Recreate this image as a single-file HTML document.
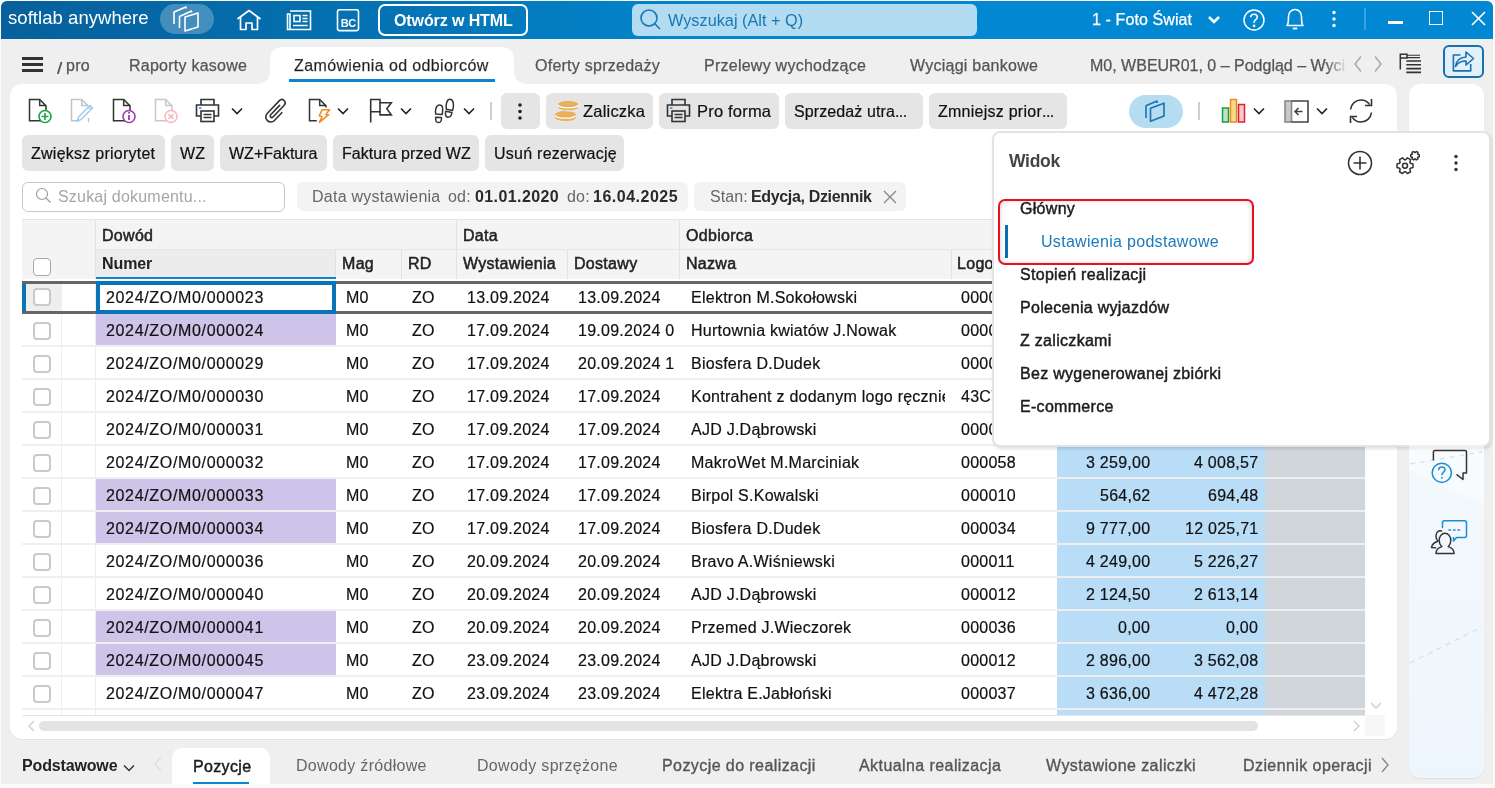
<!DOCTYPE html>
<html><head><meta charset="utf-8">
<style>
*{box-sizing:border-box;margin:0;padding:0}
html,body{width:1495px;height:788px;overflow:hidden;background:#fcfbf9;font-family:"Liberation Sans",sans-serif;color:#1c1c1c;position:relative}
.a{position:absolute;white-space:nowrap;will-change:transform}
#win{position:absolute;left:1px;top:1px;width:1492px;height:783px;background:#efefef;overflow:hidden;border-radius:6px 6px 0 0}
#hdr{position:absolute;left:0;top:0;width:1492px;height:38px;background:linear-gradient(90deg,#06609b 0%,#0472b3 25%,#0284cb 45%,#0288d2 60%,#0288d3 100%)}
.btn{position:absolute;height:36px;background:#e5e5e5;border-radius:6px;font-size:16px;line-height:37px;padding:0 9px;letter-spacing:.25px;color:#111;white-space:nowrap;-webkit-text-stroke:.2px #111}
.chip{position:absolute;top:182px;height:29px;background:#f3f3f3;border-radius:6px}
.td{font-size:16px;letter-spacing:.25px;color:#111;-webkit-text-stroke:.2px #111}
.hd{font-size:16px;letter-spacing:.3px;color:#222;-webkit-text-stroke:.5px #222}
.cbx{width:18px;height:18px;border:2px solid #cacaca;border-radius:4px;background:#fff}
.tab{position:absolute;top:57px;font-size:16px;color:#555;letter-spacing:.25px;white-space:nowrap;-webkit-text-stroke:.25px #555}
.btab{position:absolute;top:757px;font-size:16px;color:#666;letter-spacing:.3px;white-space:nowrap}
.bm{color:#555;letter-spacing:.42px;-webkit-text-stroke:.35px #555}
.mi{position:absolute;left:1020px;font-size:16px;color:#1c1c1c;letter-spacing:.3px;white-space:nowrap;-webkit-text-stroke:.45px #1c1c1c}
.btn,.tab,.btab,.mi{will-change:transform}
</style></head><body>
<div id="win"><div id="hdr"></div></div>
<!-- HEADER -->
<div class="a" style="left:8px;top:7px;font-size:18.5px;color:#fff;letter-spacing:.05px">softlab anywhere</div>
<div class="a" style="left:160px;top:4px;width:54px;height:30px;border-radius:15px;background:rgba(255,255,255,.25)"></div>
<svg class="a" style="left:172px;top:6px" width="32" height="28" viewBox="0 0 32 28" fill="none" stroke="#fff" stroke-width="1.6" stroke-linejoin="round">
 <path d="M2 18 V6 L14 1 V2.5"/>
 <path d="M7.5 22 V10.5 L19.5 5 V6.5"/>
 <path d="M13 11 L26 7 V21 L13 25 Z"/>
</svg>
<svg class="a" style="left:236px;top:9px" width="26" height="22" viewBox="0 0 26 22" fill="none" stroke="#fff" stroke-width="1.7" stroke-linejoin="round">
 <path d="M1.5 10 L13 1.5 L24.5 10"/>
 <path d="M4.5 8 V20.5 H10 V14 H16 V20.5 H21.5 V8"/>
</svg>
<svg class="a" style="left:286px;top:9px" width="26" height="22" viewBox="0 0 26 22" fill="none" stroke="#fff" stroke-width="1.6">
 <path d="M4 2 H24.5 V20.5 H1.5 V5 H4 V20.5"/>
 <rect x="8" y="6.5" width="6" height="6"/>
 <path d="M16.5 6.5 H21.5 M16.5 9.5 H21.5 M16.5 12.5 H21.5 M7 16.5 H21.5"/>
</svg>
<svg class="a" style="left:336px;top:8px" width="25" height="24" viewBox="0 0 25 24" fill="none">
 <rect x="1.5" y="1.8" width="21" height="20.8" rx="2" stroke="#fff" stroke-width="1.6"/>
 <text x="12.3" y="19" text-anchor="middle" font-family="Liberation Sans" font-weight="bold" font-size="11" fill="#fff" letter-spacing="-.3">BC</text>
</svg>
<div class="a" style="left:378px;top:4px;width:150px;height:32px;border:2px solid #fff;border-radius:7px"></div>
<div class="a" style="left:394px;top:12px;font-size:16px;font-weight:bold;color:#fff;letter-spacing:-.1px">Otwórz w HTML</div>
<div class="a" style="left:632px;top:4px;width:345px;height:32px;background:#b3dcf2;border-radius:6px"></div>
<svg class="a" style="left:638px;top:8px" width="26" height="24" viewBox="0 0 26 24" fill="none" stroke="#1677b5" stroke-width="1.6">
 <circle cx="11" cy="10" r="8"/><path d="M16.8 15.8 L22 21"/>
</svg>
<div class="a" style="left:668px;top:11px;font-size:16.3px;color:#1677b5;letter-spacing:0">Wyszukaj (Alt + Q)</div>
<div class="a" style="left:1092px;top:11px;font-size:16px;color:#fff;letter-spacing:.1px;-webkit-text-stroke:.25px #fff">1 - Foto Świat</div>
<svg class="a" style="left:1207px;top:14px" width="14" height="12" viewBox="0 0 14 12" fill="none" stroke="#fff" stroke-width="2.6"><path d="M2 3 L7 8 L12 3"/></svg>
<svg class="a" style="left:1242px;top:9px" width="24" height="22" viewBox="0 0 24 22" fill="none" stroke="#fff" stroke-width="1.5">
 <circle cx="12" cy="11" r="10"/>
 <path d="M8.7 8.3 C8.7 6.3 10.2 5.2 12 5.2 C13.9 5.2 15.3 6.4 15.3 8.2 C15.3 10.5 12.1 10.8 12.1 13.3 V14"/>
 <circle cx="12.1" cy="16.8" r=".6" fill="#fff"/>
</svg>
<svg class="a" style="left:1284px;top:6px" width="22" height="26" viewBox="0 0 22 26" fill="none" stroke="#fff" stroke-width="1.6" stroke-linejoin="round">
 <path d="M3 19.5 C4.5 18 4.5 15.5 4.5 10.5 C4.5 6.5 7.2 3.5 11 3.5 C14.8 3.5 17.5 6.5 17.5 10.5 C17.5 15.5 17.5 18 19 19.5 Z"/>
 <path d="M8.8 22.5 H13.2" stroke-width="1.8"/>
</svg>
<svg class="a" style="left:1330px;top:9px" width="8" height="20" viewBox="0 0 8 20" fill="#fff"><circle cx="4" cy="3.5" r="1.7"/><circle cx="4" cy="10" r="1.7"/><circle cx="4" cy="16.5" r="1.7"/></svg>
<div class="a" style="left:1364px;top:8px;width:2px;height:22px;background:rgba(255,255,255,.22)"></div>
<div class="a" style="left:1388px;top:21px;width:15px;height:3px;background:#fff"></div>
<div class="a" style="left:1429px;top:11px;width:14px;height:14px;border:1.7px solid #fff"></div>
<svg class="a" style="left:1470px;top:10px" width="17" height="17" viewBox="0 0 17 17" stroke="#fff" stroke-width="1.7"><path d="M2 2 L15 15 M15 2 L2 15"/></svg>

<!-- TAB BAR -->
<div class="a" style="left:22px;top:57px;width:21px;height:3px;background:#333"></div>
<div class="a" style="left:22px;top:63px;width:21px;height:3px;background:#333"></div>
<div class="a" style="left:22px;top:69px;width:21px;height:3px;background:#333"></div>
<div class="a" style="left:66px;top:57px;font-size:16px;color:#555;letter-spacing:.25px;-webkit-text-stroke:.25px #555">pro</div>
<svg class="a" style="left:56px;top:60px" width="8" height="15" viewBox="0 0 8 15"><path d="M1.8 14 L5.5 2" stroke="#555" stroke-width="1.8"/></svg>
<div class="tab" style="left:129px">Raporty kasowe</div>
<!-- active tab -->
<div class="a" style="left:270px;top:47px;width:244px;height:40px;background:#fff;border-radius:12px 12px 0 0"></div>
<div class="a" style="left:258px;top:72px;width:12px;height:12px;background:radial-gradient(circle at 0 0,#efefef 11.5px,#fff 12px)"></div>
<div class="a" style="left:514px;top:72px;width:12px;height:12px;background:radial-gradient(circle at 100% 0,#efefef 11.5px,#fff 12px)"></div>
<div class="tab" style="left:294px;color:#1c1c1c;letter-spacing:.38px">Zamówienia od odbiorców</div>
<div class="a" style="left:289px;top:79px;width:206px;height:3px;background:#0a85d0"></div>
<div class="tab" style="left:535px">Oferty sprzedaży</div>
<div class="tab" style="left:704px">Przelewy wychodzące</div>
<div class="tab" style="left:910px">Wyciągi bankowe</div>
<div class="a" style="left:1090px;top:39px;width:256px;height:45px;overflow:hidden"><div class="a" style="left:0;top:18px;font-size:16px;color:#555;letter-spacing:.0px;-webkit-text-stroke:.25px #555">M0, WBEUR01, 0 – Podgląd – Wyciągi</div></div>
<div class="a" style="left:1326px;top:39px;width:24px;height:45px;background:linear-gradient(90deg,rgba(239,239,239,0),#efefef 90%)"></div>
<svg class="a" style="left:1350px;top:54px" width="40" height="20" viewBox="0 0 40 20" fill="none" stroke="#aaa" stroke-width="1.5"><path d="M11 2.5 L5 10 L11 17.5"/><path d="M25 2.5 L31 10 L25 17.5"/></svg>
<svg class="a" style="left:1398px;top:51px" width="26" height="26" viewBox="0 0 26 26" fill="none" stroke="#333">
 <path d="M2.3 18.5 V3.3 H9 V7 H2.3" stroke-width="1.5"/>
 <path d="M9 4.2 H22 M9 6.6 H22" stroke-width="1.1"/>
 <path d="M8.3 10 H23 M8.3 13.8 H23 M8.3 17.6 H23 M8.3 21.4 H23" stroke-width="1.6"/>
</svg>
<div class="a" style="left:1443px;top:45px;width:41px;height:33px;border:2px solid #1a6fae;border-radius:6px;background:#e2f0fa"></div>
<svg class="a" style="left:1451px;top:49px" width="26" height="26" viewBox="0 0 26 26" fill="none" stroke="#1a6fae" stroke-width="1.6" stroke-linejoin="round">
 <path d="M9.5 6 H2.4 V21.9 H19.7 V15"/>
 <path d="M4.5 17.5 C5 12 8.5 8.5 15 8 V3 L22.5 9.5 L15 16 V12 C10 12 6.5 14 4.5 17.5 Z"/>
</svg>
<!-- main panel -->
<div class="a" style="left:10px;top:84px;width:1387px;height:655px;background:#fff;border-radius:12px;box-shadow:0 1px 0 #e2e2e2"></div>
<div class="a" style="left:258px;top:84px;width:268px;height:12px;background:#fff"></div>
<!-- right panel -->
<div class="a" style="left:1409px;top:84px;width:75px;height:694px;border-radius:12px;background:linear-gradient(180deg,#fff 0%,#fff 30%,#f3f8fc 55%,#eef6fd 100%);box-shadow:0 1px 1px rgba(0,0,0,.08)"></div>

<!-- TOOLBAR ROW 1 icons -->
<svg class="a" style="left:28px;top:98px" width="26" height="26" viewBox="0 0 26 26" fill="none" stroke-width="1.5">
 <path d="M13 22.7 H1.5 V1.5 H11.7 L18 7.9 V12" stroke="#333"/>
 <path d="M11.7 1.5 V7.5 H18" stroke="#333"/>
 <circle cx="17" cy="18.5" r="6" stroke="#1fa64a" stroke-width="1.7" fill="#fff"/>
 <path d="M17 15 V22 M13.5 18.5 H20.5" stroke="#1fa64a" stroke-width="1.7"/>
</svg>
<svg class="a" style="left:70px;top:98px" width="26" height="26" viewBox="0 0 26 26" fill="none" stroke-width="1.5">
 <path d="M8 22.7 H1.5 V1.5 H11.7 L18 7.9 V8.5" stroke="#c4c4c4"/>
 <path d="M11.7 1.5 V7.5 H18" stroke="#c4c4c4"/>
 <path d="M18 23.5 H18.5 V20" stroke="#c4c4c4"/>
 <path d="M7.5 23 L8.5 19 L20 7.5 L22.5 10 L11 21.5 Z M18.5 9 L21 11.5" stroke="#9fcbee" stroke-linejoin="round"/>
</svg>
<svg class="a" style="left:112px;top:98px" width="26" height="26" viewBox="0 0 26 26" fill="none" stroke-width="1.5">
 <path d="M13 22.7 H1.5 V1.5 H11.7 L18 7.9 V12" stroke="#333"/>
 <path d="M11.7 1.5 V7.5 H18" stroke="#333"/>
 <circle cx="17" cy="18.5" r="6" stroke="#9b3fb0" stroke-width="1.6" fill="#fff"/>
 <path d="M17 17 V22" stroke="#9b3fb0" stroke-width="1.8"/><circle cx="17" cy="14.8" r="1" fill="#9b3fb0"/>
</svg>
<svg class="a" style="left:154px;top:98px" width="26" height="26" viewBox="0 0 26 26" fill="none" stroke-width="1.5">
 <path d="M13 22.7 H1.5 V1.5 H11.7 L18 7.9 V12" stroke="#c8c8c8"/>
 <path d="M11.7 1.5 V7.5 H18" stroke="#c8c8c8"/>
 <circle cx="17" cy="18.5" r="6" stroke="#f6b8b8" stroke-width="1.5" fill="#fff"/>
 <path d="M14.6 16.1 L19.4 20.9 M19.4 16.1 L14.6 20.9" stroke="#f6b8b8" stroke-width="1.5"/>
</svg>
<svg class="a" style="left:195px;top:98px" width="26" height="26" viewBox="0 0 26 26" fill="none" stroke="#333" stroke-width="1.6">
 <path d="M6 7 V1.5 H19 V7"/>
 <path d="M6 18 H1.5 V7 H23.5 V18 H19"/>
 <rect x="6" y="13" width="13" height="10.5"/>
 <path d="M8.5 16.5 H16.5 M8.5 19.5 H16.5" stroke-width="1.3"/>
 <path d="M4 10 H6.5" stroke="#1e88e5" stroke-width="1.5"/>
</svg>
<svg class="a" style="left:230px;top:105px" width="14" height="12" viewBox="0 0 14 12" fill="none" stroke="#222" stroke-width="1.6"><path d="M2 3.5 L7 8.5 L12 3.5"/></svg>
<svg class="a" style="left:258px;top:94px" width="36" height="34" viewBox="0 0 36 34" fill="none" stroke="#333" stroke-width="1.6" stroke-linecap="round">
 <g transform="translate(12.8 23) rotate(43.5)"><path d="M5 -10.7 V0 A5 5 0 0 1 -5 0 V-17.8 A3.3 3.3 0 0 1 1.6 -17.8 V-1.5 A1.6 1.6 0 0 1 -1.6 -1.5 V-14.5"/></g>
</svg>
<svg class="a" style="left:308px;top:98px" width="26" height="26" viewBox="0 0 26 26" fill="none" stroke-width="1.5" stroke-linejoin="miter">
 <path d="M8.8 22.7 H1.5 V1.5 H11.7 L18 7.9 V9.5" stroke="#333"/>
 <path d="M11.7 1.5 V7.5 H18" stroke="#333"/>
 <path d="M14.2 11.7 L21.6 11.7 L17.8 16.4 L20.7 16.7 L11.4 24.3 L14.1 18.8 L11.2 17.9 Z" stroke="#f08a24" stroke-width="1.5" stroke-linejoin="round" fill="#fff"/>
</svg>
<svg class="a" style="left:336px;top:105px" width="14" height="12" viewBox="0 0 14 12" fill="none" stroke="#222" stroke-width="1.6"><path d="M2 3.5 L7 8.5 L12 3.5"/></svg>
<svg class="a" style="left:368px;top:98px" width="26" height="26" viewBox="0 0 26 26" fill="none" stroke="#333" stroke-width="1.6" stroke-linejoin="miter">
 <path d="M2.7 24.6 V1.5 H12 V4.7 H23.3 L18.8 10.8 L23.3 16.9 H12 V13.7 H2.7"/><path d="M12 4.7 V13.7"/>
</svg>
<svg class="a" style="left:399px;top:105px" width="14" height="12" viewBox="0 0 14 12" fill="none" stroke="#222" stroke-width="1.6"><path d="M2 3.5 L7 8.5 L12 3.5"/></svg>
<svg class="a" style="left:433px;top:98px" width="24" height="26" viewBox="0 0 24 26" fill="none" stroke="#333" stroke-width="1.5" stroke-linejoin="round">
 <path d="M2.7 16 C2 12 3 7 6.6 7 C9.9 7 10.2 11 9.3 16.5 Z"/>
 <path d="M2.8 19.2 L8.4 19.4 C8.8 22 8 24.6 5.5 24.6 C3 24.6 2.2 22 2.8 19.2 Z"/>
 <path d="M13.4 11.3 C12.6 7 13.5 1.3 16.9 1.3 C20.5 1.3 21.3 6.5 19.7 12.4 Z"/>
 <path d="M12.7 13.3 L18.9 14.5 C18.6 17.5 17 19.2 15 19.2 C12.9 19.2 11.9 17 12.7 13.3 Z"/>
</svg>
<svg class="a" style="left:462px;top:105px" width="14" height="12" viewBox="0 0 14 12" fill="none" stroke="#222" stroke-width="1.6"><path d="M2 3.5 L7 8.5 L12 3.5"/></svg>
<div class="a" style="left:490px;top:102px;width:2px;height:18px;background:#cfcfcf"></div>
<div class="btn" style="left:501px;top:93px;width:39px"></div>
<svg class="a" style="left:516px;top:101px" width="8" height="20" viewBox="0 0 8 20" fill="#222"><circle cx="4" cy="4" r="1.8"/><circle cx="4" cy="10.5" r="1.8"/><circle cx="4" cy="17" r="1.8"/></svg>
<div class="btn" style="left:546px;top:93px;width:107px"></div>
<svg class="a" style="left:553px;top:97px" width="28" height="26" viewBox="0 0 28 26">
 <path d="M2 17.5 A10.5 3.5 0 0 1 23 17.5 V20.5 A10.5 3.4 0 0 1 2 20.5 Z" fill="#e8b05a"/>
 <path d="M2.3 18.6 A10.4 3.2 0 0 0 22.7 18.6" fill="none" stroke="#fff" stroke-width="1.3"/>
 <path d="M4.6 7 A10.6 3.5 0 0 1 25.8 7 V10.3 A10.6 3.5 0 0 1 4.6 10.3 Z" fill="#e8b05a" stroke="#e5e5e5" stroke-width="1.2"/>
 <path d="M4.9 8 A10.4 3.3 0 0 0 25.5 8" fill="none" stroke="#fff" stroke-width="1.3"/>
</svg>
<div class="a" style="left:583px;top:102px;font-size:16.5px;color:#111;letter-spacing:.2px;-webkit-text-stroke:.2px #111">Zaliczka</div>
<div class="btn" style="left:659px;top:93px;width:120px"></div>
<svg class="a" style="left:666px;top:98px" width="26" height="26" viewBox="0 0 26 26" fill="none" stroke="#333" stroke-width="1.6">
 <path d="M6 7 V1.5 H19 V7"/>
 <path d="M6 18 H1.5 V7 H23.5 V18 H19"/>
 <rect x="6" y="13" width="13" height="10.5"/>
 <path d="M8.5 16.5 H16.5 M8.5 19.5 H16.5" stroke-width="1.3"/>
 <path d="M4 10 H6.5" stroke="#1e88e5" stroke-width="1.5"/>
</svg>
<div class="a" style="left:697px;top:102px;font-size:16.5px;color:#111;letter-spacing:.2px;-webkit-text-stroke:.2px #111">Pro forma</div>
<div class="btn" style="left:785px;top:93px;width:138px;letter-spacing:.1px">Sprzedaż utra<span style="letter-spacing:-.5px">...</span></div>
<div class="btn" style="left:929px;top:93px;width:138px">Zmniejsz prior<span style="letter-spacing:-.5px">...</span></div>
<!-- right toolbar -->
<div class="a" style="left:1129px;top:95px;width:54px;height:33px;border-radius:16.5px;background:#b6dcf2"></div>
<svg class="a" style="left:1142px;top:97px" width="28" height="28" viewBox="0 0 28 28" fill="none" stroke="#1a73b0" stroke-width="1.6" stroke-linejoin="round">
 <path d="M4 21 V8.8 L15 4 V6"/><path d="M8.5 11.2 L22 6.2 V19 L8.5 24.2 Z"/>
</svg>
<div class="a" style="left:1198px;top:102px;width:2px;height:18px;background:#cfcfcf"></div>
<svg class="a" style="left:1220px;top:97px" width="28" height="28" viewBox="0 0 28 28" stroke-width="1.5">
 <rect x="2.5" y="11" width="6" height="14" fill="#bfe3c6" stroke="#1a9e3f"/>
 <rect x="10.5" y="2.5" width="6" height="22.5" fill="#fcd98b" stroke="#f08a24"/>
 <rect x="18.5" y="7.5" width="6" height="17.5" fill="#f7c8cc" stroke="#e0202e"/>
</svg>
<svg class="a" style="left:1252px;top:105px" width="14" height="12" viewBox="0 0 14 12" fill="none" stroke="#222" stroke-width="1.6"><path d="M2 3.5 L7 8.5 L12 3.5"/></svg>
<svg class="a" style="left:1284px;top:100px" width="26" height="24" viewBox="0 0 26 24" fill="none" stroke="#444" stroke-width="1.6">
 <rect x="1" y="1" width="6.5" height="21" fill="#c9c9c9" stroke="#888"/>
 <path d="M7.5 1 H24 V22 H7.5"/>
 <path d="M18.5 11.5 H11.5 M14.5 8 L11 11.5 L14.5 15"/>
</svg>
<svg class="a" style="left:1315px;top:105px" width="14" height="12" viewBox="0 0 14 12" fill="none" stroke="#222" stroke-width="1.6"><path d="M2 3.5 L7 8.5 L12 3.5"/></svg>
<svg class="a" style="left:1347px;top:97px" width="28" height="28" viewBox="0 0 28 28" fill="none" stroke="#333" stroke-width="1.6">
 <path d="M3.5 12.5 C4.2 7 8.7 3 14 3 C17.6 3 20.7 4.7 22.6 7.6"/><path d="M24.5 2 V8.5 H18"/>
 <path d="M24.5 15.5 C23.8 21 19.3 25 14 25 C10.4 25 7.3 23.3 5.4 20.4"/><path d="M3.5 26 V19.5 H10"/>
</svg>
<!-- TOOLBAR ROW 2 -->
<div class="btn" style="left:22px;top:135px;width:143px">Zwiększ priorytet</div>
<div class="btn" style="left:171px;top:135px;width:43px">WZ</div>
<div class="btn" style="left:220px;top:135px;width:107px;letter-spacing:0">WZ+Faktura</div>
<div class="btn" style="left:333px;top:135px;width:146px;letter-spacing:.05px">Faktura przed WZ</div>
<div class="btn" style="left:485px;top:135px;width:139px">Usuń rezerwację</div>
<!-- FILTER ROW -->
<div class="a" style="left:22px;top:182px;width:263px;height:30px;border:1px solid #c8c8c8;border-radius:6px;background:#fff"></div>
<svg class="a" style="left:34px;top:186px" width="20" height="20" viewBox="0 0 20 20" fill="none" stroke="#9e9e9e" stroke-width="1.2"><circle cx="8" cy="8" r="5.5"/><path d="M12 12 L16.5 16.5"/></svg>
<div class="a" style="left:58px;top:188px;font-size:16px;color:#a6a6a6;letter-spacing:.2px">Szukaj dokumentu...</div>
<div class="chip" style="left:297px;width:391px"></div>
<div class="a" style="left:312px;top:188px;font-size:16px;color:#666;letter-spacing:.25px">Data wystawienia</div>
<div class="a" style="left:448px;top:188px;font-size:16px;color:#666;letter-spacing:.2px">od:</div>
<div class="a" style="left:475px;top:188px;font-size:16px;color:#2a2a2a;font-weight:bold;letter-spacing:.4px">01.01.2020</div>
<div class="a" style="left:567px;top:188px;font-size:16px;color:#666;letter-spacing:.2px">do:</div>
<div class="a" style="left:593px;top:188px;font-size:16px;color:#2a2a2a;font-weight:bold;letter-spacing:.5px">16.04.2025</div>
<div class="chip" style="left:694px;width:212px"></div>
<div class="a" style="left:710px;top:188px;font-size:16px;color:#666;letter-spacing:.1px">Stan:</div>
<div class="a" style="left:751px;top:188px;font-size:16px;color:#2a2a2a;font-weight:bold;letter-spacing:-.35px">Edycja, Dziennik</div>
<svg class="a" style="left:882px;top:189px" width="16" height="16" viewBox="0 0 16 16" stroke="#888" stroke-width="1.4"><path d="M2 2 L14 14 M14 2 L2 14"/></svg>

<!-- TABLE -->
<div class="a" style="left:22px;top:219px;width:1343px;height:1px;background:#e4e4e4"></div>
<div class="a" style="left:22px;top:220px;width:1343px;height:59px;background:#f4f4f4"></div>
<div class="a" style="left:96px;top:250px;width:240px;height:27px;background:#ececec"></div>
<div class="a" style="left:95px;top:220px;width:1px;height:59px;background:#e2e2e2"></div>
<div class="a" style="left:456px;top:220px;width:1px;height:59px;background:#e2e2e2"></div>
<div class="a" style="left:679px;top:220px;width:1px;height:59px;background:#e2e2e2"></div>
<div class="a" style="left:1057px;top:220px;width:1px;height:59px;background:#e2e2e2"></div>
<div class="a" style="left:96px;top:249px;width:1269px;height:1px;background:#e6e6e6"></div>
<div class="a" style="left:335px;top:250px;width:1px;height:29px;background:#e2e2e2"></div>
<div class="a" style="left:401px;top:250px;width:1px;height:29px;background:#e2e2e2"></div>
<div class="a" style="left:567px;top:250px;width:1px;height:29px;background:#e2e2e2"></div>
<div class="a" style="left:951px;top:250px;width:1px;height:29px;background:#e2e2e2"></div>
<div class="a" style="left:96px;top:277px;width:240px;height:2px;background:#0a85d0"></div>
<div class="a" style="left:33px;top:258px;width:18px;height:18px;border:1.5px solid #a8a8a8;border-radius:4px;background:#fff"></div>
<div class="a hd" style="left:102px;top:227px">Dowód</div>
<div class="a hd" style="left:463px;top:227px">Data</div>
<div class="a hd" style="left:686px;top:227px">Odbiorca</div>
<div class="a hd" style="left:342px;top:255px">Mag</div>
<div class="a hd" style="left:408px;top:255px">RD</div>
<div class="a hd" style="left:463px;top:255px">Wystawienia</div>
<div class="a hd" style="left:574px;top:255px">Dostawy</div>
<div class="a hd" style="left:686px;top:255px">Nazwa</div>
<div class="a hd" style="left:957px;top:255px">Logo</div>
<div class="a" style="left:102px;top:255px;font-size:16px;font-weight:bold;color:#222;letter-spacing:-.1px">Numer</div>
<div class="a" style="left:61px;top:284px;width:1px;height:432px;background:#ededed"></div>
<div class="a" style="left:95px;top:284px;width:1px;height:432px;background:#ededed"></div>
<div class="a" style="left:1057px;top:281px;width:208px;height:33px;background:#b9dcf7"></div>
<div class="a" style="left:1265px;top:281px;width:100px;height:33px;background:#d0d6dc"></div>
<div class="a cbx" style="left:33px;top:289px"></div>
<div class="a td" style="left:106px;top:289px;letter-spacing:.66px">2024/ZO/M0/000023</div>
<div class="a td" style="left:346px;top:289px">M0</div>
<div class="a td" style="left:412px;top:289px">ZO</div>
<div class="a td" style="left:467px;top:289px">13.09.2024</div>
<div class="a td" style="left:578px;top:289px;width:99px;overflow:hidden">13.09.2024</div>
<div class="a td" style="left:691px;top:289px;width:254px;overflow:hidden">Elektron M.Sokołowski</div>
<div class="a td" style="left:961px;top:289px">000001</div>
<div class="a" style="left:1057px;top:314px;width:208px;height:33px;background:#b9dcf7"></div>
<div class="a" style="left:1265px;top:314px;width:100px;height:33px;background:#d0d6dc"></div>
<div class="a" style="left:96px;top:314px;width:240px;height:31px;background:#cec3e8"></div>
<div class="a" style="left:22px;top:345px;width:1343px;height:2px;background:#efefef"></div>
<div class="a cbx" style="left:33px;top:322px"></div>
<div class="a td" style="left:106px;top:322px;letter-spacing:.66px">2024/ZO/M0/000024</div>
<div class="a td" style="left:346px;top:322px">M0</div>
<div class="a td" style="left:412px;top:322px">ZO</div>
<div class="a td" style="left:467px;top:322px">17.09.2024</div>
<div class="a td" style="left:578px;top:322px;width:99px;overflow:hidden">19.09.2024 0</div>
<div class="a td" style="left:691px;top:322px;width:254px;overflow:hidden">Hurtownia kwiatów J.Nowak</div>
<div class="a td" style="left:961px;top:322px">000002</div>
<div class="a" style="left:1057px;top:347px;width:208px;height:33px;background:#b9dcf7"></div>
<div class="a" style="left:1265px;top:347px;width:100px;height:33px;background:#d0d6dc"></div>
<div class="a" style="left:22px;top:378px;width:1343px;height:2px;background:#efefef"></div>
<div class="a cbx" style="left:33px;top:355px"></div>
<div class="a td" style="left:106px;top:355px;letter-spacing:.66px">2024/ZO/M0/000029</div>
<div class="a td" style="left:346px;top:355px">M0</div>
<div class="a td" style="left:412px;top:355px">ZO</div>
<div class="a td" style="left:467px;top:355px">17.09.2024</div>
<div class="a td" style="left:578px;top:355px;width:99px;overflow:hidden">20.09.2024 1</div>
<div class="a td" style="left:691px;top:355px;width:254px;overflow:hidden">Biosfera D.Dudek</div>
<div class="a td" style="left:961px;top:355px">000034</div>
<div class="a" style="left:1057px;top:380px;width:208px;height:33px;background:#b9dcf7"></div>
<div class="a" style="left:1265px;top:380px;width:100px;height:33px;background:#d0d6dc"></div>
<div class="a" style="left:22px;top:411px;width:1343px;height:2px;background:#efefef"></div>
<div class="a cbx" style="left:33px;top:388px"></div>
<div class="a td" style="left:106px;top:388px;letter-spacing:.66px">2024/ZO/M0/000030</div>
<div class="a td" style="left:346px;top:388px">M0</div>
<div class="a td" style="left:412px;top:388px">ZO</div>
<div class="a td" style="left:467px;top:388px">17.09.2024</div>
<div class="a td" style="left:578px;top:388px;width:99px;overflow:hidden">17.09.2024</div>
<div class="a td" style="left:691px;top:388px;width:254px;overflow:hidden">Kontrahent z dodanym logo ręcznie</div>
<div class="a td" style="left:961px;top:388px">43C7A1</div>
<div class="a" style="left:1057px;top:413px;width:208px;height:33px;background:#b9dcf7"></div>
<div class="a" style="left:1265px;top:413px;width:100px;height:33px;background:#d0d6dc"></div>
<div class="a" style="left:22px;top:444px;width:1343px;height:2px;background:#efefef"></div>
<div class="a cbx" style="left:33px;top:421px"></div>
<div class="a td" style="left:106px;top:421px;letter-spacing:.66px">2024/ZO/M0/000031</div>
<div class="a td" style="left:346px;top:421px">M0</div>
<div class="a td" style="left:412px;top:421px">ZO</div>
<div class="a td" style="left:467px;top:421px">17.09.2024</div>
<div class="a td" style="left:578px;top:421px;width:99px;overflow:hidden">17.09.2024</div>
<div class="a td" style="left:691px;top:421px;width:254px;overflow:hidden">AJD J.Dąbrowski</div>
<div class="a td" style="left:961px;top:421px">000012</div>
<div class="a" style="left:1057px;top:446px;width:208px;height:33px;background:#b9dcf7"></div>
<div class="a" style="left:1265px;top:446px;width:100px;height:33px;background:#d0d6dc"></div>
<div class="a" style="left:22px;top:477px;width:1343px;height:2px;background:#efefef"></div>
<div class="a cbx" style="left:33px;top:454px"></div>
<div class="a td" style="left:106px;top:454px;letter-spacing:.66px">2024/ZO/M0/000032</div>
<div class="a td" style="left:346px;top:454px">M0</div>
<div class="a td" style="left:412px;top:454px">ZO</div>
<div class="a td" style="left:467px;top:454px">17.09.2024</div>
<div class="a td" style="left:578px;top:454px;width:99px;overflow:hidden">17.09.2024</div>
<div class="a td" style="left:691px;top:454px;width:254px;overflow:hidden">MakroWet M.Marciniak</div>
<div class="a td" style="left:961px;top:454px">000058</div>
<div class="a td" style="right:345px;top:454px">3 259,00</div>
<div class="a td" style="right:237px;top:454px">4 008,57</div>
<div class="a" style="left:1057px;top:479px;width:208px;height:33px;background:#b9dcf7"></div>
<div class="a" style="left:1265px;top:479px;width:100px;height:33px;background:#d0d6dc"></div>
<div class="a" style="left:96px;top:479px;width:240px;height:31px;background:#cec3e8"></div>
<div class="a" style="left:22px;top:510px;width:1343px;height:2px;background:#efefef"></div>
<div class="a cbx" style="left:33px;top:487px"></div>
<div class="a td" style="left:106px;top:487px;letter-spacing:.66px">2024/ZO/M0/000033</div>
<div class="a td" style="left:346px;top:487px">M0</div>
<div class="a td" style="left:412px;top:487px">ZO</div>
<div class="a td" style="left:467px;top:487px">17.09.2024</div>
<div class="a td" style="left:578px;top:487px;width:99px;overflow:hidden">17.09.2024</div>
<div class="a td" style="left:691px;top:487px;width:254px;overflow:hidden">Birpol S.Kowalski</div>
<div class="a td" style="left:961px;top:487px">000010</div>
<div class="a td" style="right:345px;top:487px">564,62</div>
<div class="a td" style="right:237px;top:487px">694,48</div>
<div class="a" style="left:1057px;top:512px;width:208px;height:33px;background:#b9dcf7"></div>
<div class="a" style="left:1265px;top:512px;width:100px;height:33px;background:#d0d6dc"></div>
<div class="a" style="left:96px;top:512px;width:240px;height:31px;background:#cec3e8"></div>
<div class="a" style="left:22px;top:543px;width:1343px;height:2px;background:#efefef"></div>
<div class="a cbx" style="left:33px;top:520px"></div>
<div class="a td" style="left:106px;top:520px;letter-spacing:.66px">2024/ZO/M0/000034</div>
<div class="a td" style="left:346px;top:520px">M0</div>
<div class="a td" style="left:412px;top:520px">ZO</div>
<div class="a td" style="left:467px;top:520px">17.09.2024</div>
<div class="a td" style="left:578px;top:520px;width:99px;overflow:hidden">17.09.2024</div>
<div class="a td" style="left:691px;top:520px;width:254px;overflow:hidden">Biosfera D.Dudek</div>
<div class="a td" style="left:961px;top:520px">000034</div>
<div class="a td" style="right:345px;top:520px">9 777,00</div>
<div class="a td" style="right:237px;top:520px">12 025,71</div>
<div class="a" style="left:1057px;top:545px;width:208px;height:33px;background:#b9dcf7"></div>
<div class="a" style="left:1265px;top:545px;width:100px;height:33px;background:#d0d6dc"></div>
<div class="a" style="left:22px;top:576px;width:1343px;height:2px;background:#efefef"></div>
<div class="a cbx" style="left:33px;top:553px"></div>
<div class="a td" style="left:106px;top:553px;letter-spacing:.66px">2024/ZO/M0/000036</div>
<div class="a td" style="left:346px;top:553px">M0</div>
<div class="a td" style="left:412px;top:553px">ZO</div>
<div class="a td" style="left:467px;top:553px">20.09.2024</div>
<div class="a td" style="left:578px;top:553px;width:99px;overflow:hidden">20.09.2024</div>
<div class="a td" style="left:691px;top:553px;width:254px;overflow:hidden">Bravo A.Wiśniewski</div>
<div class="a td" style="left:961px;top:553px">000011</div>
<div class="a td" style="right:345px;top:553px">4 249,00</div>
<div class="a td" style="right:237px;top:553px">5 226,27</div>
<div class="a" style="left:1057px;top:578px;width:208px;height:33px;background:#b9dcf7"></div>
<div class="a" style="left:1265px;top:578px;width:100px;height:33px;background:#d0d6dc"></div>
<div class="a" style="left:22px;top:609px;width:1343px;height:2px;background:#efefef"></div>
<div class="a cbx" style="left:33px;top:586px"></div>
<div class="a td" style="left:106px;top:586px;letter-spacing:.66px">2024/ZO/M0/000040</div>
<div class="a td" style="left:346px;top:586px">M0</div>
<div class="a td" style="left:412px;top:586px">ZO</div>
<div class="a td" style="left:467px;top:586px">20.09.2024</div>
<div class="a td" style="left:578px;top:586px;width:99px;overflow:hidden">20.09.2024</div>
<div class="a td" style="left:691px;top:586px;width:254px;overflow:hidden">AJD J.Dąbrowski</div>
<div class="a td" style="left:961px;top:586px">000012</div>
<div class="a td" style="right:345px;top:586px">2 124,50</div>
<div class="a td" style="right:237px;top:586px">2 613,14</div>
<div class="a" style="left:1057px;top:611px;width:208px;height:33px;background:#b9dcf7"></div>
<div class="a" style="left:1265px;top:611px;width:100px;height:33px;background:#d0d6dc"></div>
<div class="a" style="left:96px;top:611px;width:240px;height:31px;background:#cec3e8"></div>
<div class="a" style="left:22px;top:642px;width:1343px;height:2px;background:#efefef"></div>
<div class="a cbx" style="left:33px;top:619px"></div>
<div class="a td" style="left:106px;top:619px;letter-spacing:.66px">2024/ZO/M0/000041</div>
<div class="a td" style="left:346px;top:619px">M0</div>
<div class="a td" style="left:412px;top:619px">ZO</div>
<div class="a td" style="left:467px;top:619px">20.09.2024</div>
<div class="a td" style="left:578px;top:619px;width:99px;overflow:hidden">20.09.2024</div>
<div class="a td" style="left:691px;top:619px;width:254px;overflow:hidden">Przemed J.Wieczorek</div>
<div class="a td" style="left:961px;top:619px">000036</div>
<div class="a td" style="right:345px;top:619px">0,00</div>
<div class="a td" style="right:237px;top:619px">0,00</div>
<div class="a" style="left:1057px;top:644px;width:208px;height:33px;background:#b9dcf7"></div>
<div class="a" style="left:1265px;top:644px;width:100px;height:33px;background:#d0d6dc"></div>
<div class="a" style="left:96px;top:644px;width:240px;height:31px;background:#cec3e8"></div>
<div class="a" style="left:22px;top:675px;width:1343px;height:2px;background:#efefef"></div>
<div class="a cbx" style="left:33px;top:652px"></div>
<div class="a td" style="left:106px;top:652px;letter-spacing:.66px">2024/ZO/M0/000045</div>
<div class="a td" style="left:346px;top:652px">M0</div>
<div class="a td" style="left:412px;top:652px">ZO</div>
<div class="a td" style="left:467px;top:652px">23.09.2024</div>
<div class="a td" style="left:578px;top:652px;width:99px;overflow:hidden">23.09.2024</div>
<div class="a td" style="left:691px;top:652px;width:254px;overflow:hidden">AJD J.Dąbrowski</div>
<div class="a td" style="left:961px;top:652px">000012</div>
<div class="a td" style="right:345px;top:652px">2 896,00</div>
<div class="a td" style="right:237px;top:652px">3 562,08</div>
<div class="a" style="left:1057px;top:677px;width:208px;height:33px;background:#b9dcf7"></div>
<div class="a" style="left:1265px;top:677px;width:100px;height:33px;background:#d0d6dc"></div>
<div class="a" style="left:22px;top:708px;width:1343px;height:2px;background:#efefef"></div>
<div class="a cbx" style="left:33px;top:685px"></div>
<div class="a td" style="left:106px;top:685px;letter-spacing:.66px">2024/ZO/M0/000047</div>
<div class="a td" style="left:346px;top:685px">M0</div>
<div class="a td" style="left:412px;top:685px">ZO</div>
<div class="a td" style="left:467px;top:685px">23.09.2024</div>
<div class="a td" style="left:578px;top:685px;width:99px;overflow:hidden">23.09.2024</div>
<div class="a td" style="left:691px;top:685px;width:254px;overflow:hidden">Elektra E.Jabłoński</div>
<div class="a td" style="left:961px;top:685px">000037</div>
<div class="a td" style="right:345px;top:685px">3 636,00</div>
<div class="a td" style="right:237px;top:685px">4 472,28</div>
<div class="a" style="left:1057px;top:710px;width:208px;height:5px;background:#b9dcf7"></div>
<div class="a" style="left:1265px;top:710px;width:100px;height:5px;background:#d0d6dc"></div>
<div class="a" style="left:22px;top:715px;width:1343px;height:1px;background:#e6e6e6"></div>
<div class="a" style="left:22px;top:281px;width:1343px;height:3px;background:#666"></div>
<div class="a" style="left:22px;top:311px;width:1343px;height:3px;background:#666"></div>
<div class="a" style="left:22px;top:284px;width:4px;height:27px;background:#0a74b8"></div>
<div class="a" style="left:26px;top:284px;width:36px;height:27px;background:#eeeeee"></div>
<div class="a cbx" style="left:33px;top:288px"></div>
<div class="a" style="left:96px;top:281px;width:240px;height:33px;border:4px solid #0a74b8;background:transparent"></div>
<svg class="a" style="left:26px;top:719px" width="12" height="14" viewBox="0 0 12 14" fill="none" stroke="#ccc" stroke-width="1.3"><path d="M8 2 L3 7 L8 12"/></svg>
<div class="a" style="left:39px;top:721px;width:1219px;height:10px;border-radius:5px;background:#e3e3e3"></div>
<svg class="a" style="left:1350px;top:719px" width="12" height="14" viewBox="0 0 12 14" fill="none" stroke="#ccc" stroke-width="1.3"><path d="M4 2 L9 7 L4 12"/></svg>
<div class="a" style="left:1365px;top:715px;width:20px;height:21px;background:#f7f7f7"></div>
<svg class="a" style="left:1369px;top:700px" width="14" height="12" viewBox="0 0 14 12" fill="none" stroke="#ccc" stroke-width="1.3"><path d="M2 3 L7 8 L12 3"/></svg>
<!-- POPUP -->
<div class="a" style="left:992px;top:131px;width:499px;height:316px;background:#fff;border:2px solid #e3e3e3;border-radius:8px;box-shadow:1px 2px 3px rgba(0,0,0,.12)"></div>
<div class="a" style="left:1009px;top:151px;font-size:17.5px;font-weight:bold;color:#444;letter-spacing:-.3px">Widok</div>
<svg class="a" style="left:1346px;top:149px" width="28" height="28" viewBox="0 0 28 28" fill="none" stroke="#333" stroke-width="1.6"><circle cx="14" cy="14" r="11.5"/><path d="M14 7.5 V20.5 M7.5 14 H20.5"/></svg>
<svg class="a" style="left:1394px;top:147px" width="30" height="30" viewBox="0 0 30 30" fill="none" stroke="#333" stroke-width="1.5" stroke-linejoin="round">
 <path d="M16.48 16.25 L19.00 16.91 L19.00 20.49 L16.48 21.15 L15.86 22.22 L16.55 24.74 L13.45 26.52 L11.62 24.67 L10.38 24.67 L8.55 26.52 L5.45 24.74 L6.14 22.22 L5.52 21.15 L3.00 20.49 L3.00 16.91 L5.52 16.25 L6.14 15.18 L5.45 12.66 L8.55 10.88 L10.38 12.73 L11.62 12.73 L13.45 10.88 L16.55 12.66 L15.86 15.18 Z"/>
 <circle cx="11" cy="18.7" r="2.5"/>
 <path d="M23.90 7.34 L25.29 7.74 L25.29 9.66 L23.90 10.06 L23.63 10.53 L23.98 11.94 L22.32 12.90 L21.27 11.89 L20.73 11.89 L19.68 12.90 L18.02 11.94 L18.37 10.53 L18.10 10.06 L16.71 9.66 L16.71 7.74 L18.10 7.34 L18.37 6.87 L18.02 5.46 L19.68 4.50 L20.73 5.51 L21.27 5.51 L22.32 4.50 L23.98 5.46 L23.63 6.87 Z" fill="#fff"/>
</svg>
<svg class="a" style="left:1452px;top:153px" width="8" height="20" viewBox="0 0 8 20" fill="#333"><circle cx="4" cy="3.5" r="1.7"/><circle cx="4" cy="10" r="1.7"/><circle cx="4" cy="16.5" r="1.7"/></svg>
<div class="a" style="left:998px;top:199px;width:256px;height:66px;border:2px solid #e8101a;border-radius:7px;box-shadow:inset 0 0 5px rgba(0,0,0,.18)"></div>
<div class="mi" style="top:200px">Główny</div>
<div class="a" style="left:1005px;top:225px;width:3px;height:33px;background:#0a6fb0"></div>
<div class="a" style="left:1041px;top:233px;font-size:16px;color:#1a7ab8;letter-spacing:.3px">Ustawienia podstawowe</div>
<div class="mi" style="top:266px">Stopień realizacji</div>
<div class="mi" style="top:299px">Polecenia wyjazdów</div>
<div class="mi" style="top:332px">Z zaliczkami</div>
<div class="mi" style="top:365px">Bez wygenerowanej zbiórki</div>
<div class="mi" style="top:398px">E-commerce</div>
<!-- right panel icons -->
<svg class="a" style="left:1409px;top:430px" width="75" height="260" viewBox="0 0 75 260" fill="none">
 <path d="M0 40 L75 75 L75 0 L0 0 Z" fill="#ffffff" opacity=".45"/>
 <path d="M1 34 L73 22" stroke="#cfe3f3" stroke-width="1.3" stroke-dasharray="5 5"/>
 <path d="M1 233 L73 197" stroke="#cfe3f3" stroke-width="1.3" stroke-dasharray="5 5"/>
</svg>
<svg class="a" style="left:1430px;top:447px" width="40" height="38" viewBox="0 0 40 38" fill="none" stroke-width="1.5" stroke-linejoin="round">
 <path d="M3.4 13.6 V4.9 Q3.4 3.4 4.9 3.4 H35 Q36.5 3.4 36.5 4.9 V26 H33 V32.5 L26.5 27.3" stroke="#333"/>
 <circle cx="11.8" cy="25.8" r="9.6" stroke="#1a8fd6"/>
 <path d="M8.6 23.2 C8.6 21 10 19.9 11.8 19.9 C13.6 19.9 15 21.1 15 22.8 C15 25 12 25.2 12 27.6 V28.2" stroke="#1a8fd6" stroke-width="1.5"/>
 <circle cx="12" cy="30.8" r=".6" fill="#1a8fd6" stroke="#1a8fd6" stroke-width=".8"/>
</svg>
<svg class="a" style="left:1429px;top:518px" width="42" height="38" viewBox="0 0 42 38" fill="none" stroke-width="1.5" stroke-linejoin="round" stroke-linecap="round">
 <path d="M13.5 9.5 V4.8 Q13.5 2.8 15.5 2.8 H35.5 Q37.5 2.8 37.5 4.8 V17.6 Q37.5 19.6 35.5 19.6 H27.5 L24.5 23 V19.6" stroke="#1a8fd6"/>
 <path d="M20 12 H21.5 M24.5 12 H26 M29 12 H30.5" stroke="#1a8fd6" stroke-width="1.6"/>
 <path d="M12.5 13 C9.5 12 7 14.5 7 18 C7 20.5 7.8 22 9 23.3 C5.5 24.3 3 26.5 2.5 29.5 L6.5 29.8" stroke="#333"/>
 <path d="M7 35.6 C7 31.5 9.5 29.5 12.8 28.6 C11 27 10.2 25 10.2 22.5 C10.2 18.5 12.6 15.3 16 15.3 C19.4 15.3 21.8 18.5 21.8 22.5 C21.8 25 21 27 19.2 28.6 C22.5 29.5 25 31.5 25 35.6 Z" stroke="#333" fill="#f3f8fd"/>
</svg>
<!-- BOTTOM TABS -->
<div class="a" style="left:22px;top:757px;font-size:16px;font-weight:bold;color:#222;letter-spacing:-.15px">Podstawowe</div>
<svg class="a" style="left:122px;top:763px" width="14" height="10" viewBox="0 0 14 10" fill="none" stroke="#333" stroke-width="1.5"><path d="M2 2.5 L7 7.5 L12 2.5"/></svg>
<svg class="a" style="left:152px;top:755px" width="12" height="18" viewBox="0 0 12 18" fill="none" stroke="#dcdcdc" stroke-width="1.3"><path d="M9 2 L3 9 L9 16"/></svg>
<div class="a" style="left:172px;top:748px;width:98px;height:40px;background:#fff;border-radius:10px 10px 0 0"></div>
<div class="a" style="left:193px;top:758px;font-size:16px;color:#1c1c1c;letter-spacing:.35px;-webkit-text-stroke:.45px #1c1c1c">Pozycje</div>
<div class="a" style="left:193px;top:782px;width:56px;height:3px;background:#0a85d0"></div>
<div class="btab" style="left:296px">Dowody źródłowe</div>
<div class="btab" style="left:477px">Dowody sprzężone</div>
<div class="btab bm" style="left:662px">Pozycje do realizacji</div>
<div class="btab bm" style="left:859px">Aktualna realizacja</div>
<div class="btab bm" style="left:1046px">Wystawione zaliczki</div>
<div class="btab bm" style="left:1243px">Dziennik operacji</div>
<svg class="a" style="left:1378px;top:756px" width="14" height="18" viewBox="0 0 14 18" fill="none" stroke="#888" stroke-width="1.4"><path d="M4 2 L10 9 L4 16"/></svg>
<div class="a" style="left:0;top:784px;width:1495px;height:4px;background:#fcfbf9"></div>
<div class="a" style="left:1493px;top:0;width:2px;height:788px;background:#fcfbf9"></div>

</body></html>
